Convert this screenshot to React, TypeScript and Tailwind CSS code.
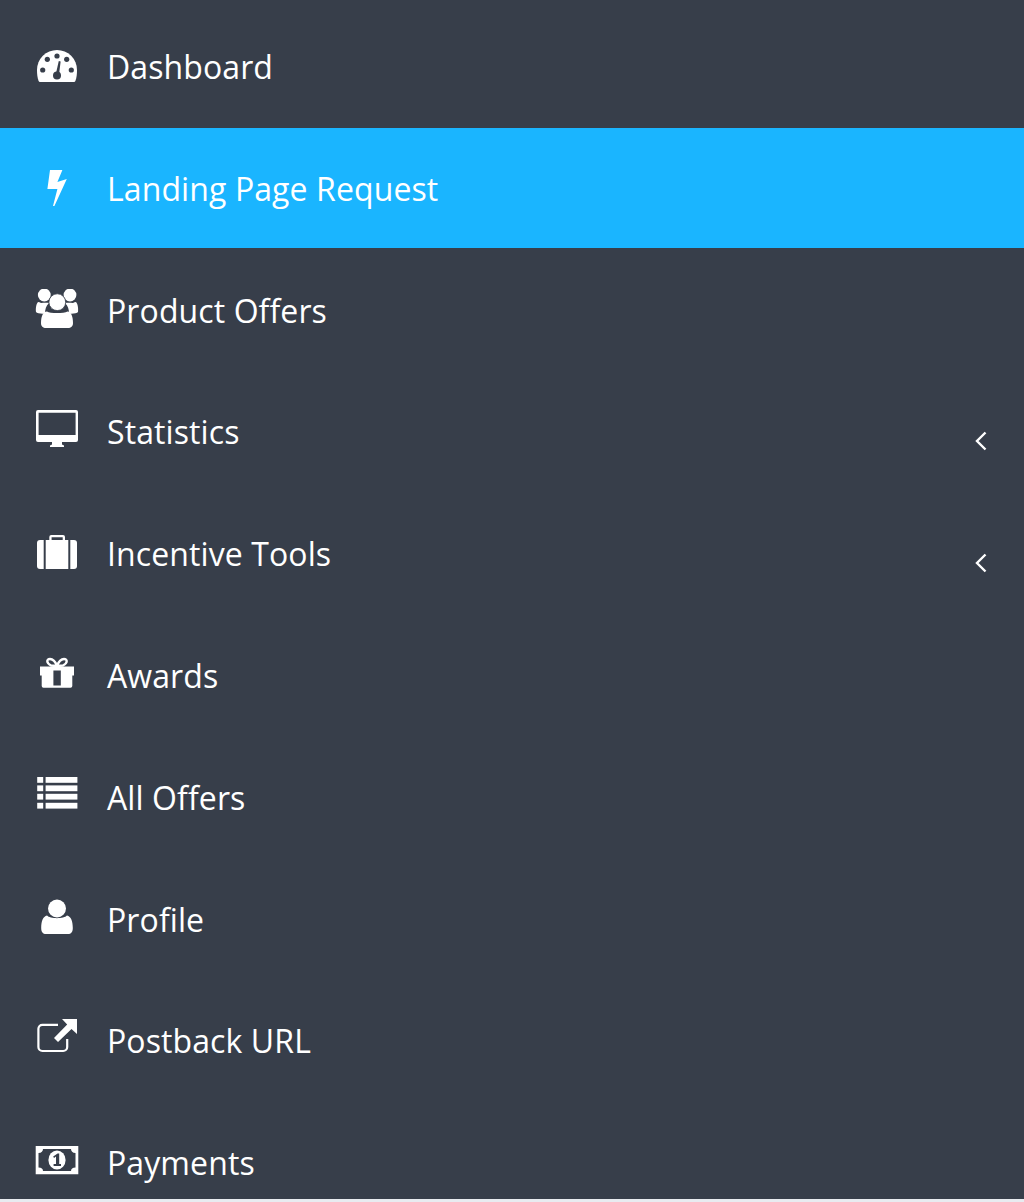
import type { ReactNode } from 'react';

type Item = { label: string; viewBox: string; icon: ReactNode; active?: boolean; caret?: boolean };

const DARK = '#373e4a';

const items: Item[] = [
  {
    label: 'Dashboard',
    viewBox: '35 45 44 44',
    icon: (
      <>
        <path d="M37 70 A20 20 0 0 1 77 70 C77 74 76.6 78 75.4 81 Q75 82 74 82 H40 Q39 82 38.6 81 C37.4 78 37 74 37 70 Z" fill="#fff" />
        <g fill={DARK}>
          <circle cx="57" cy="56" r="2.6" />
          <circle cx="47.3" cy="59.3" r="2.6" />
          <circle cx="66.7" cy="59.3" r="2.6" />
          <circle cx="42.7" cy="70" r="2.6" />
          <circle cx="71.3" cy="70" r="2.6" />
          <circle cx="57" cy="75.5" r="4" />
          <path d="M58.8 61 L60.6 61.4 L59 75 L55.6 75 Z" />
        </g>
      </>
    ),
  },
  {
    label: 'Landing Page Request',
    viewBox: '35 167 44 44',
    active: true,
    icon: <path d="M50 170 L62.4 170 L57.4 182 L66.8 179 L54.4 206 L53 206 L57.4 189 L47.4 189 Z" fill="#fff" />,
  },
  {
    label: 'Product Offers',
    viewBox: '35 289 44 44',
    icon: (
      <>
        <circle cx="44.3" cy="295" r="6.4" fill="#fff" />
        <circle cx="70" cy="295" r="6.4" fill="#fff" />
        <path d="M38 302 C36 304 35.6 309 36 312 C37 313.5 42 314 45 313.5 C45 309 46 306 49 303 C46 302.5 43 303 41 303 C40 302.6 39 302 38 302 Z" fill="#fff" />
        <path d="M76 302 C78 304 78.4 309 78 312 C77 313.5 72 314 69 313.5 C69 309 68 306 65 303 C68 302.5 71 303 73 303 C74 302.6 75 302 76 302 Z" fill="#fff" />
        <circle cx="57.3" cy="302.2" r="8.4" fill="#fff" stroke={DARK} strokeWidth="0.8" />
        <path d="M47 311.5 C50 313.5 64 313.5 67.5 311.5 C71 312 73 316 73 323 C73 326.5 71 328 68 328 L46 328 C43 328 41 326.5 41 323 C41 316 43 312 47 311.5 Z" fill="#fff" />
      </>
    ),
  },
  {
    label: 'Statistics',
    viewBox: '35 410 44 44',
    caret: true,
    icon: (
      <>
        <path fillRule="evenodd" d="M38 410 H76 a2 2 0 0 1 2 2 V440 a2 2 0 0 1-2 2 H38 a2 2 0 0 1-2-2 V412 a2 2 0 0 1 2-2 Z M38.6 412.8 V435 H75.6 V412.8 Z" fill="#fff" />
        <path d="M52 442 H62 V444.5 L64 445.5 V447 H50 V445.5 L52 444.5 Z" fill="#fff" />
      </>
    ),
  },
  {
    label: 'Incentive Tools',
    viewBox: '35 532 44 44',
    caret: true,
    icon: (
      <>
        <path d="M43.7 540 V569 H40 a3 3 0 0 1-3-3 V543 a3 3 0 0 1 3-3 Z" fill="#fff" />
        <path d="M70.3 540 V569 H74 a3 3 0 0 0 3-3 V543 a3 3 0 0 0-3-3 Z" fill="#fff" />
        <path fillRule="evenodd" d="M45.7 540 H49.3 V537 a2 2 0 0 1 2-2 H63 a2 2 0 0 1 2 2 V540 H68.3 V569 H45.7 Z M51.6 537.2 V540 H62.7 V537.2 Z" fill="#fff" />
      </>
    ),
  },
  {
    label: 'Awards',
    viewBox: '35 654 44 44',
    icon: (
      <>
        <path d="M40 666.5 H74 V675.5 H72.3 V686 a1.8 1.8 0 0 1-1.8 1.8 H43.5 a1.8 1.8 0 0 1-1.8-1.8 V675.5 H40 Z" fill="#fff" />
        <rect x="53.4" y="670.5" width="7.4" height="15" fill={DARK} />
        <path d="M57 666 L51 665.5 C46 663 46.5 659 50 659 C53 659 55.5 662 57 665.8 C58.5 662 61 659 64 659 C67.5 659 68 663 63 665.5 Z" fill="none" stroke="#fff" strokeWidth="2.4" />
      </>
    ),
  },
  {
    label: 'All Offers',
    viewBox: '35 776 44 44',
    icon: (
      <g fill="#fff">
        <rect x="37.2" y="777" width="6" height="5.8" />
        <rect x="45.6" y="777" width="31.8" height="5.8" />
        <rect x="37.2" y="785.4" width="6" height="5.8" />
        <rect x="45.6" y="785.4" width="31.8" height="5.8" />
        <rect x="37.2" y="793.8" width="6" height="5.8" />
        <rect x="45.6" y="793.8" width="31.8" height="5.8" />
        <rect x="37.2" y="802.8" width="6" height="5.8" />
        <rect x="45.6" y="802.8" width="31.8" height="5.8" />
      </g>
    ),
  },
  {
    label: 'Profile',
    viewBox: '35 898 44 44',
    icon: (
      <>
        <circle cx="57" cy="908.5" r="9" fill="#fff" />
        <path d="M47 915.5 C50 919 64 919 67 915.5 C71 916.5 72.8 921 72.8 928 C72.8 932 71 934 68 934 L46 934 C43 934 41.2 932 41.2 928 C41.2 921 43 916.5 47 915.5 Z" fill="#fff" />
      </>
    ),
  },
  {
    label: 'Postback URL',
    viewBox: '35 1019 44 44',
    icon: (
      <>
        <path d="M58 1024.8 H42.4 a4 4 0 0 0-4 4 V1047 a4 4 0 0 0 4 4 H63.2 a4 4 0 0 0 4-4 V1039" fill="none" stroke="#fff" strokeWidth="2.2" />
        <path d="M77 1019 V1034 L71.5 1029 L58 1042 L54 1038 L67.2 1024.6 L62 1019 Z" fill="#fff" />
      </>
    ),
  },
  {
    label: 'Payments',
    viewBox: '35 1141 44 44',
    icon: (
      <>
        <path fillRule="evenodd" d="M35.7 1146 H78.3 V1174.3 H35.7 Z M43 1149 C43 1151 41.5 1153 38.5 1153 V1167.5 C41.5 1167.5 43 1169 43 1171 H71 C71 1169 72.5 1167.5 75.5 1167.5 V1153 C72.5 1153 71 1151 71 1149 Z" fill="#fff" />
        <ellipse cx="57" cy="1160" rx="8.6" ry="9.4" fill="#fff" />
        <path d="M53.2 1156.4 L57.6 1153.6 H59.2 V1164 H61 V1166 H53.6 V1164 H56 V1156.6 L54 1158 Z" fill={DARK} />
      </>
    ),
  },
];

export default function App() {
  return (
    <div className="flex h-[1202px] flex-col overflow-hidden bg-[#373e4a] font-['Open_Sans',sans-serif] text-white">
      <ul className="h-[1199px] overflow-hidden pt-[6.4px]">
        {items.map((item) => (
          <li key={item.label} className="h-[121.8px]">
            <a
              href="#"
              className={`flex h-[119.4px] w-full items-center pt-[2px] pl-[35px] ${item.active ? 'bg-[#1ab5ff]' : ''}`}
            >
              <svg width="44" height="44" viewBox={item.viewBox} className="shrink-0">
                {item.icon}
              </svg>
              <span className="ml-[28px] text-[32px] leading-none font-[370] tracking-[0.1px]">{item.label}</span>
              {item.caret && (
                <svg width="14" height="20" viewBox="0 0 14 20" className="mt-[18px] ml-auto mr-[36px]" fill="none" stroke="#fff" strokeWidth="2.4">
                  <path d="M11.5 1.5 L3 10 L11.5 18.5" />
                </svg>
              )}
            </a>
          </li>
        ))}
      </ul>
      <div className="h-[3px] bg-[#e8ebf0]" />
    </div>
  );
}
